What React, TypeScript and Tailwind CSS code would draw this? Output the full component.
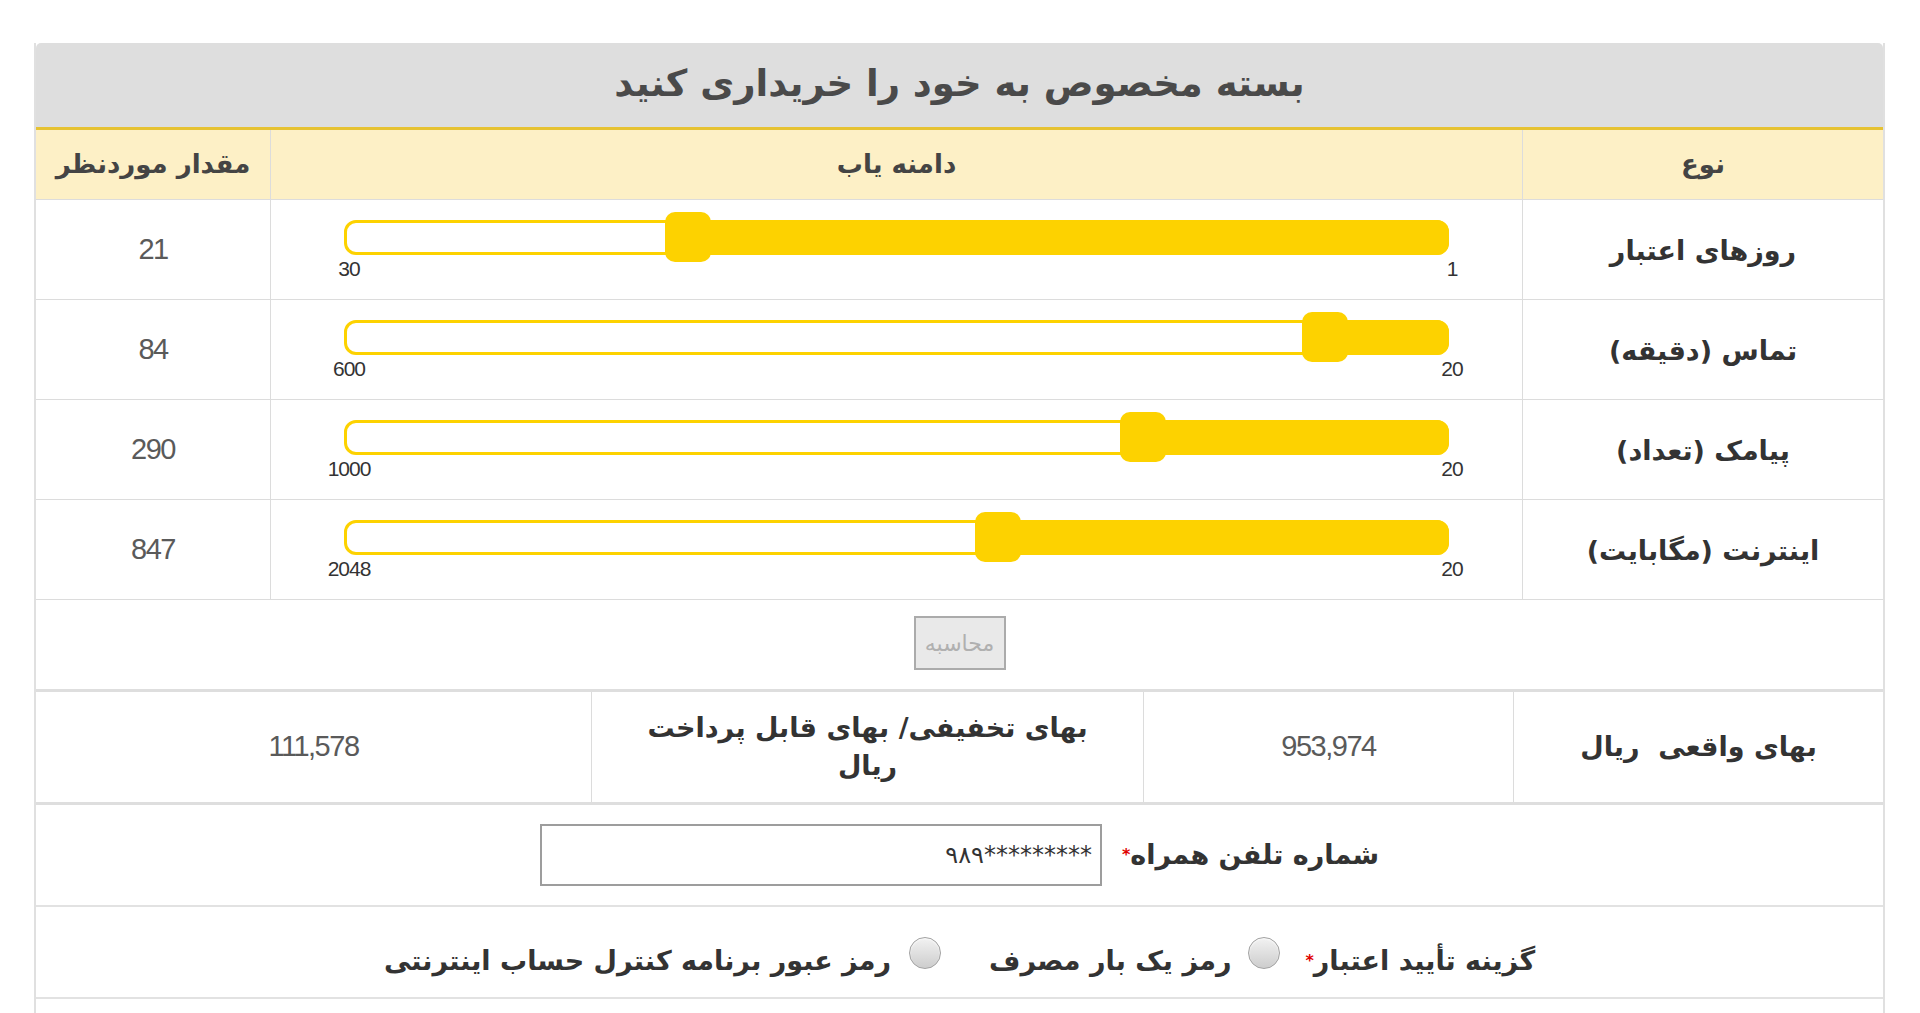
import React from "react";

const FA = { fontFamily: '"DejaVu Sans", "Noto Sans", sans-serif' };
const NUM = { fontFamily: '"Liberation Sans Narrow", "Liberation Sans", Arial, sans-serif' };
const NUM2 = { fontFamily: '"Liberation Sans", Arial, sans-serif' };

type Row = { label: string; min: number; max: number; value: number };

const rows: Row[] = [
  { label: "روزهای اعتبار", min: 1, max: 30, value: 21 },
  { label: "تماس (دقیقه)", min: 20, max: 600, value: 84 },
  { label: "پیامک (تعداد)", min: 20, max: 1000, value: 290 },
  { label: "اینترنت (مگابایت)", min: 20, max: 2048, value: 847 },
];

function Slider({ min, max, value }: { min: number; max: number; value: number }) {
  const frac = 1 - (value - min) / (max - min);
  const pct = `${(frac * 100).toFixed(3)}%`;
  return (
    <div dir="ltr" className="relative w-full pt-[20px]">
      <div className="relative h-[35px] rounded-[12px] border-[3px] border-[#fdd200] bg-white">
        <div
          className="absolute top-[-3px] bottom-[-3px] right-[-3px] rounded-r-[12px] bg-[#fdd200]"
          style={{ left: pct }}
        />
        <div
          className="absolute top-[-11px] h-[50px] w-[46px] -translate-x-1/2 rounded-[10px] bg-[#fdd200]"
          style={{ left: pct }}
        />
      </div>
      <div className="relative h-[26px]" style={NUM2}>
        <span className="absolute left-[-25px] top-[2px] w-[60px] text-center text-[21px] leading-[24px] tracking-[-1px] text-[#333]">
          {max}
        </span>
        <span className="absolute right-[-33px] top-[2px] w-[60px] text-center text-[21px] leading-[24px] tracking-[-1px] text-[#333]">
          {min}
        </span>
      </div>
    </div>
  );
}

function Radio() {
  return (
    <span className="inline-block h-[32px] w-[32px] shrink-0 rounded-full border border-[#a2a2a2] bg-linear-to-b from-[#f2f2f2] to-[#cdcdcd] shadow-[inset_0_1px_2px_rgba(255,255,255,0.8)] -translate-y-[8px]" />
  );
}

function Star() {
  return <span className="relative top-[-4px] text-[16px] text-[#e00000]">*</span>;
}

export default function App() {
  return (
    <div className="min-h-screen bg-white pl-[34px] pr-[35px] pt-[43px]" style={FA}>
      <div dir="rtl" className="border-x-2 border-[#e0e0e0] text-[#333]">
        {/* Title */}
        <div className="flex h-[87px] items-center justify-center rounded-t-[5px] border-b-[3px] border-[#e6c232] bg-[#dedede] pb-[2px] text-[37px] font-bold text-[#4a4a4a]">
          بسته مخصوص به خود را خریداری کنید
        </div>

        {/* Header */}
        <div className="grid h-[70px] grid-cols-[361px_1fr_234px] border-b border-[#dcdcdc] bg-[#fdf0c6] text-[26px] font-bold text-[#444]">
          <div className="flex items-center justify-center border-l border-[#dcdcdc]">نوع</div>
          <div className="flex items-center justify-center border-l border-[#dcdcdc]">دامنه یاب</div>
          <div className="flex items-center justify-center">مقدار موردنظر</div>
        </div>

        {/* Slider rows */}
        {rows.map((r) => (
          <div
            key={r.label}
            className="grid h-[100px] grid-cols-[361px_1fr_234px] border-b border-[#dcdcdc]"
          >
            <div className="flex items-center justify-center border-l border-[#dcdcdc] pt-[4px] text-[27px] font-bold text-[#333]">
              {r.label}
            </div>
            <div className="flex items-start border-l border-[#dcdcdc] px-[73px]">
              <Slider min={r.min} max={r.max} value={r.value} />
            </div>
            <div className="flex items-center justify-center text-[29px] tracking-[-1.5px] text-[#5a5a5a]" style={NUM}>
              {r.value}
            </div>
          </div>
        ))}

        {/* Button row */}
        <div className="flex h-[92px] items-center justify-center border-b-[3px] border-[#dedede] pb-[3px]">
          <button className="flex h-[54px] w-[92px] items-center justify-center border-2 border-[#ababab] bg-[#e9e9e9] text-[22px] text-[#b0b0b0]">
            محاسبه
          </button>
        </div>

        {/* Price row */}
        <div className="grid h-[113px] grid-cols-[370px_370px_1fr_555px] border-b-[3px] border-[#dedede] text-[#333]">
          <div className="flex items-center justify-center border-l border-[#dcdcdc] text-[27px] font-bold">
            بهای واقعی&nbsp;&nbsp;ریال
          </div>
          <div className="flex items-center justify-center border-l border-[#dcdcdc] text-[29px] tracking-[-1.5px] text-[#5a5a5a]" style={NUM}>
            953,974
          </div>
          <div className="flex items-center justify-center border-l border-[#dcdcdc] text-center text-[27px] font-bold leading-[38px]">
            <span>
              بهای تخفیفی/ بهای قابل پرداخت
              <br />
              ریال
            </span>
          </div>
          <div className="flex items-center justify-center text-[29px] tracking-[-1.5px] text-[#5a5a5a]" style={NUM}>
            111,578
          </div>
        </div>

        {/* Phone row */}
        <div className="flex h-[102px] items-center justify-center gap-[20px] border-b-2 border-[#e2e2e2]">
          <span className="text-[27px] font-bold text-[#333]">
            شماره تلفن همراه
            <Star />
          </span>
          <input
            dir="ltr"
            readOnly
            value="۹۸۹*********"
            className="h-[62px] w-[562px] border-2 border-[#9d9d9d] bg-white px-[8px] text-right text-[24px] tracking-[1px] text-[#333] outline-none"
            style={FA}
          />
        </div>

        {/* Radio row */}
        <div className="flex h-[92px] items-center justify-center border-b-2 border-[#e2e2e2] pt-[18px] text-[27px] font-bold text-[#333]">
          <span>
            گزینه تأیید اعتبار
            <Star />
          </span>
          <span className="w-[25px]" />
          <Radio />
          <span className="w-[17px]" />
          <span>رمز یک بار مصرف</span>
          <span className="w-[48px]" />
          <Radio />
          <span className="w-[18px]" />
          <span>رمز عبور برنامه کنترل حساب اینترنتی</span>
        </div>

        <div className="h-[40px]" />
      </div>
    </div>
  );
}
